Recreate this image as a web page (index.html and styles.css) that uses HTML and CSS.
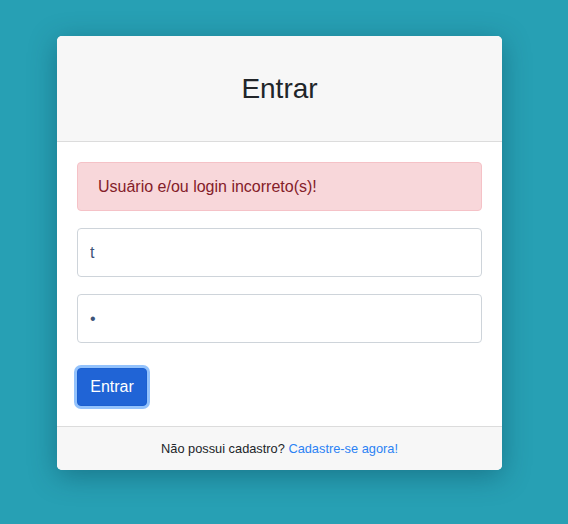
FILE: index.html
```html
<!DOCTYPE html>
<html lang="pt-BR">
<head>
<meta charset="utf-8">
<title>Entrar</title>
<link rel="stylesheet" href="styles.css">
</head>
<body>
<div class="page">
  <div class="card">
    <div class="card-header"><h1 class="title">Entrar</h1></div>
    <div class="card-body">
      <div class="alert">Usuário e/ou login incorreto(s)!</div>
      <input class="field" type="text" value="t">
      <input class="field" type="password" value="a">
      <button class="btn" type="button">Entrar</button>
    </div>
    <div class="card-footer">Não possui cadastro? <a class="link" href="#">Cadastre-se agora!</a></div>
  </div>
</div>
</body>
</html>
```
FILE: styles.css
```css
html, body { margin: 0; height: 100%; }
body {
  background: #27a0b4;
  font-family: "Liberation Sans", Arial, sans-serif;
  color: #212529;
}
.page {
  padding: 36px 0 0 57px;
}
.card {
  width: 445px;
  background: #fff;
  border-radius: 5px;
  overflow: hidden;
  box-shadow: 0 6px 28px rgba(0, 40, 60, 0.35);
}
.card-header {
  background: #f7f7f7;
  border-bottom: 1px solid #dcdcdc;
  padding: 35px 20px 34px;
  text-align: center;
}
.title {
  margin: 0;
  font-size: 28px;
  line-height: 36px;
  font-weight: 400;
  color: #212529;
}
.card-body {
  padding: 20px;
  display: flex;
  flex-direction: column;
  align-items: flex-start;
}
.alert {
  box-sizing: border-box;
  width: 100%;
  height: 49px;
  padding: 0 20px;
  display: flex;
  align-items: center;
  background: #f8d7da;
  border: 1px solid #f5c2c7;
  border-radius: 4px;
  color: #842029;
  font-size: 16px;
}
.field {
  box-sizing: border-box;
  width: 100%;
  height: 49px;
  margin-top: 17px;
  padding: 0 12px;
  border: 1px solid #ced4da;
  border-radius: 4px;
  font-family: "Liberation Sans", Arial, sans-serif;
  font-size: 16px;
  color: #3d5479;
  background: #fff;
  outline: none;
}
.btn {
  box-sizing: border-box;
  margin-top: 25px;
  height: 38px;
  width: 70px;
  padding: 0 12px;
  border: 1px solid #1b5fd0;
  border-radius: 4px;
  background: #2064d6;
  color: #fff;
  font-family: "Liberation Sans", Arial, sans-serif;
  font-size: 16px;
  box-shadow: 0 0 0 3px #93c2fc;
}
.card-footer {
  background: #f7f7f7;
  border-top: 1px solid #dcdcdc;
  padding: 12px 20px;
  line-height: 19px;
  font-size: 12.8px;
  text-align: center;
  color: #212529;
}
.link {
  color: #2b82f4;
  text-decoration: none;
}
```
